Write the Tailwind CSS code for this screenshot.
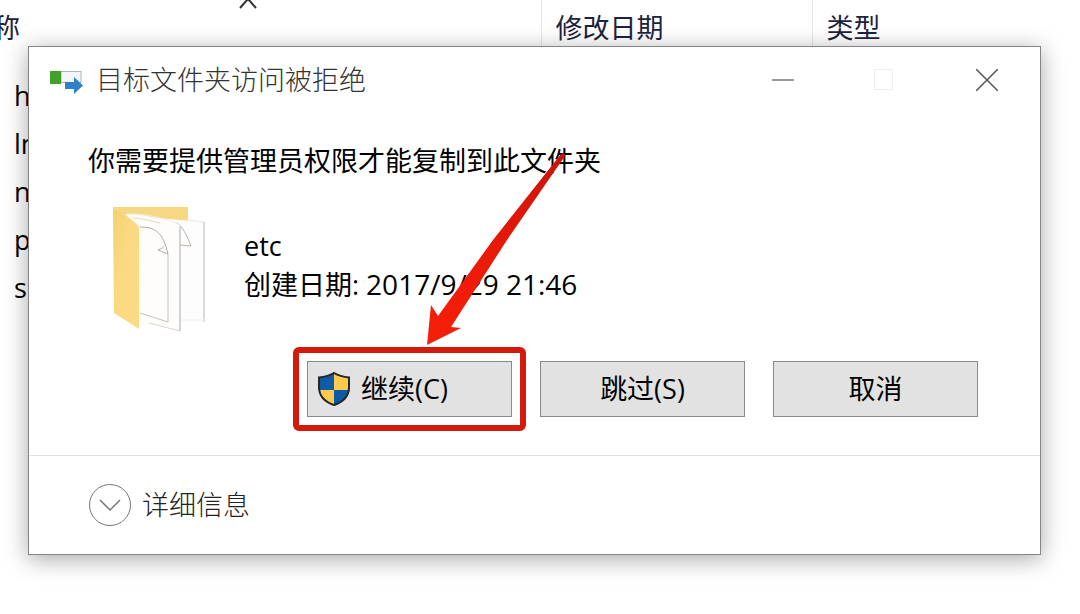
<!DOCTYPE html>
<html lang="zh-CN">
<head>
  <meta charset="UTF-8" />
  <meta name="viewport" content="width=device-width, initial-scale=1.0"/>
  <title>目标文件夹访问被拒绝</title>
  <script src="https://cdn.jsdelivr.net/npm/@tailwindcss/browser@4"></script>
</head>
<body class="bg-white text-black text-[27px] font-['Open_Sans','Noto_Sans_CJK_SC',sans-serif]">

  <main class="relative min-h-screen overflow-hidden">

    <!-- FILE LIST -->
    <div class="-ml-[34px]">
      <table class="w-full table-fixed text-left leading-10">
        <thead>
          <tr class="h-[72px] align-top text-[#1c2340]">
            <th class="relative w-[575px] border-r border-gray-200 pt-2 font-normal">
              名称
              <svg class="absolute left-[272px] top-0" width="20" height="9" viewBox="0 0 20 9" fill="none" stroke="#333" stroke-width="2"><path d="M2 8 L10 -1 L18 8"/></svg>
            </th>
            <th class="w-[271px] border-r border-gray-200 pt-2 pl-[14px] font-normal">修改日期</th>
            <th class="pt-2 pl-[14px] font-normal">类型</th>
          </tr>
        </thead>
        <tbody>
          <tr class="h-12"><td class="pl-12">h</td><td></td><td></td></tr>
          <tr class="h-12"><td class="pl-12">lm</td><td></td><td></td></tr>
          <tr class="h-12"><td class="pl-12">n</td><td></td><td></td></tr>
          <tr class="h-12"><td class="pl-12">p</td><td></td><td></td></tr>
          <tr class="h-12"><td class="pl-12">s</td><td></td><td></td></tr>
        </tbody>
      </table>
    </div>

    <!-- DIALOG -->
    <section role="dialog" aria-labelledby="title" class="absolute left-7 right-[39px] top-[46px] border border-[#858585] bg-white shadow-[0_4px_22px_rgba(0,0,0,0.35)]">

      <!-- TITLE BAR -->
      <header class="flex h-[66px] items-center pr-0.5 pl-5">
        <svg width="36" height="28" viewBox="0 0 36 28">
          <rect x="12" y="5.500" width="20" height="11" fill="#f1f6f8" stroke="#a9b3b8"/>
          <rect x="1" y="5" width="11" height="13" fill="#43a02c"/>
          <path d="M16 16 H25 V11 L34 19.500 L25 28 V23 H16 Z" fill="#2f80c8"/>
        </svg>
        <h1 id="title" class="ml-[11px] flex-1 font-light text-[#333]">目标文件夹访问被拒绝</h1>
        <button aria-label="最小化" class="flex h-full w-[102px] items-center justify-center">
          <svg width="22" height="22" viewBox="0 0 22 22" stroke="#777" stroke-width="1.500"><path d="M0 11 H22"/></svg>
        </button>
        <button aria-label="最大化" disabled class="flex h-full w-[102px] items-center justify-center">
          <svg width="22" height="22" viewBox="0 0 22 22" fill="none" stroke="#eeeeee"><rect x="0.500" y="0.500" width="18" height="20"/></svg>
        </button>
        <button aria-label="关闭" class="flex h-full w-[102px] items-center justify-center">
          <svg width="22" height="22" viewBox="0 0 22 22" stroke="#555" stroke-width="1.500"><path d="M0 0 L22 22 M22 0 L0 22"/></svg>
        </button>
      </header>

      <!-- MESSAGE -->
      <div class="pt-7 pr-[62px] pb-[38px] pl-[59px]">
        <p class="leading-10">你需要提供管理员权限才能复制到此文件夹</p>

        <div class="mt-6 ml-[23px] flex items-center">
          <svg width="96" height="128" viewBox="0 0 96 128">
            <defs>
              <linearGradient id="flap" x1="0" y1="0" x2="1" y2="1">
                <stop offset="0" stop-color="#f3cf70"/>
                <stop offset="0.400" stop-color="#fbd981"/>
                <stop offset="1" stop-color="#fbdb85"/>
              </linearGradient>
            </defs>
            <path d="M2 2 H77 V18 H20 Z" fill="#f6d782"/>
            <path d="M34 12 L93 17 V117 H66 Z" fill="#fdfdfd"/>
            <path d="M77 15 L93 17" stroke="#e6e6e6" fill="none"/>
            <path d="M93 17 V117" stroke="#b5b5b5" fill="none"/>
            <path d="M66 115 H95" stroke="#eeeeee" fill="none"/>
            <path d="M66 18 C71 21 76 30 80 41 L69 40" stroke="#b9b0a8" fill="#fff"/>
            <path d="M14 9 C30 8 55 14 69 22 V126 L37 118 L28 122 V24 Z" fill="#fefdfc"/>
            <path d="M16 9 C32 8 55 13 69 20" fill="none" stroke="#f0ebe6"/>
            <path d="M38 118 L69 126" fill="none" stroke="#d9d5d2"/>
            <path d="M69 22 V126" stroke="#a9a9a9" fill="none"/>
            <path d="M22 13 C32 14 42 16 49 18" stroke="#efd9b0" fill="none"/>
            <path d="M29 22 C45 22 52 28 57 49 L47 45 C51 43 52 43 53 41" fill="none" stroke="#aaa"/>
            <path d="M57 49 V117 L29 108" fill="none" stroke="#c4c4c4"/>
            <path d="M2 2 C8 9 20 11 28 22 V124 L3 108 Z" fill="url(#flap)"/>
          </svg>
          <div class="ml-[37px] pb-2 leading-[38px]">
            <p>etc</p>
            <p>创建日期: <time class="text-[28px]">2017/9/29 21:46</time></p>
          </div>
        </div>

        <div class="mt-7 flex justify-end gap-7">
          <div class="relative">
            <button class="flex h-14 w-[205px] items-center border border-[#8a8a8a] bg-[#e2e2e2] pl-[9px]">
              <svg width="34" height="36" viewBox="0 0 34 36">
                <defs>
                  <clipPath id="shield"><path d="M17 1 C12 5 7 6 1 6 V16 C1 25 8 32 17 35 C26 32 33 25 33 16 V6 C27 6 22 5 17 1 Z"/></clipPath>
                </defs>
                <g clip-path="url(#shield)">
                  <rect width="17" height="19" fill="#0d5aa7"/>
                  <rect x="17" width="17" height="19" fill="#ffcb4f"/>
                  <rect y="19" width="17" height="17" fill="#ffcb4f"/>
                  <rect x="17" y="19" width="17" height="17" fill="#0d5aa7"/>
                </g>
                <path d="M17 2 C12 5 7 6 2 6.500 V16 C2 25 8 31 17 34 C26 31 32 25 32 16 V6.500 C27 6 22 5 17 2 Z" fill="none" stroke="#23272e" stroke-width="2"/>
              </svg>
              <span class="ml-[10px]">继续(C)</span>
            </button>
            <!-- red highlight and arrow -->
            <div class="pointer-events-none absolute -inset-[14px] rounded-md border-[6px] border-[#d31a0c]"></div>
            <svg class="pointer-events-none absolute bottom-[70px] left-[117px] z-10" width="144" height="196" viewBox="0 0 144 196">
              <defs>
                <linearGradient id="arrow" x1="1" y1="0" x2="0" y2="1">
                  <stop offset="0" stop-color="#c9140a"/>
                  <stop offset="0.600" stop-color="#ee1a08"/>
                  <stop offset="1" stop-color="#f5200a"/>
                </linearGradient>
              </defs>
              <path d="M137 3 Q141 1 141 5 L83 89 L27 176 L37 177 L3 194 L7 154 L14 165 L69 89 Z" fill="url(#arrow)"/>
            </svg>
          </div>
          <button class="h-14 w-[205px] border border-[#8a8a8a] bg-[#e2e2e2]">跳过(S)</button>
          <button class="h-14 w-[205px] border border-[#8a8a8a] bg-[#e2e2e2]">取消</button>
        </div>
      </div>

      <!-- DETAILS -->
      <footer class="border-t border-[#e3e3e3] pl-[59px]">
        <button class="flex h-[98px] items-center gap-[10px] font-light text-[#222]">
          <svg width="44" height="44" viewBox="0 0 44 44" fill="none" stroke="#777">
            <circle cx="22" cy="22" r="20.500"/>
            <path d="M12 17 L22 27 L32 17" stroke-width="1.500"/>
          </svg>
          详细信息
        </button>
      </footer>
    </section>

  </main>

</body>
</html>
